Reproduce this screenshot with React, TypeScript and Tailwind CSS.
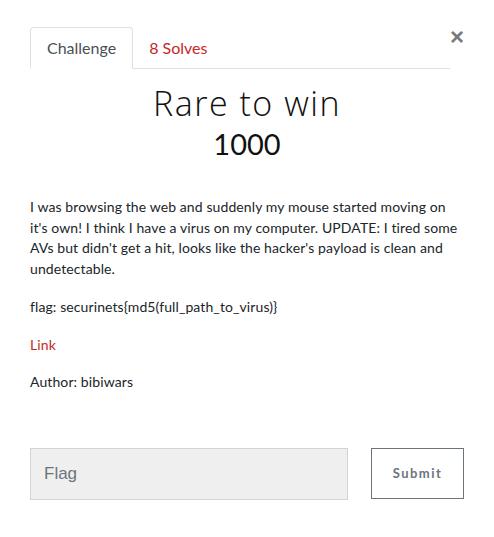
import React from "react";

export default function App() {
  return (
    <div className="w-[494px] h-[537px] bg-white px-[30px] pt-[27px] text-[#212529]" style={{ fontFamily: "Lato, 'Noto Sans', sans-serif" }}>
      <div className="flex items-start">
        <ul className="flex flex-1 border-b border-[#dee2e6] h-[42px]">
          <li className="-mb-px">
            <div className="h-[42px] px-4 flex items-center border border-[#dee2e6] border-b-white rounded-t-[4px] bg-white text-[16px] text-[#495057]">Challenge</div>
          </li>
          <li>
            <div className="h-[41px] px-4 flex items-center text-[16px] text-[#c62828]">8 Solves</div>
          </li>
        </ul>
        <button className="w-[14px] ml-0 mt-[-2px] text-[24px] leading-none font-bold text-[#7a7a7a]" style={{ fontFamily: "'Liberation Sans', Arial, sans-serif" }}>×</button>
      </div>

      <div className="text-center mt-[14px]">
        <h3 className="text-[34px] leading-[40px] font-light tracking-[1.5px] text-[#111]" style={{ fontFamily: "'Open Sans', Lato, sans-serif" }}>Rare to win</h3>
        <h4 className="text-[29px] leading-[34px] text-[#111] mt-[4px]">1000</h4>
      </div>

      <div className="mt-[36px] text-[14px] tracking-[0.1px] leading-[20.7px] w-[434px]">
        <p className="mb-[17px] whitespace-nowrap">
          I was browsing the web and suddenly my mouse started moving on<br />
          it's own! I think I have a virus on my computer. UPDATE: I tired some<br />
          AVs but didn't get a hit, looks like the hacker's payload is clean and<br />
          undetectable.
        </p>
        <p className="mb-[17px]">flag: securinets{"{"}md5(full_path_to_virus){"}"}</p>
        <p className="mb-[17px]"><a className="text-[#c62828]">Link</a></p>
        <p className="mb-4">Author: bibiwars</p>
      </div>

      <div className="flex mt-[55px]">
        <div className="w-[318px] h-[52px] bg-[#efefef] border border-[#d0d3d8] flex items-center px-[13px] text-[17px] text-[#6c757d]" style={{ fontFamily: "'Liberation Sans', Arial, sans-serif" }}>Flag</div>
        <button className="ml-[23px] w-[93px] h-[51px] border border-[#6c757d] text-[13px] font-bold tracking-[1.5px] text-[#6c757d]">Submit</button>
      </div>
    </div>
  );
}
